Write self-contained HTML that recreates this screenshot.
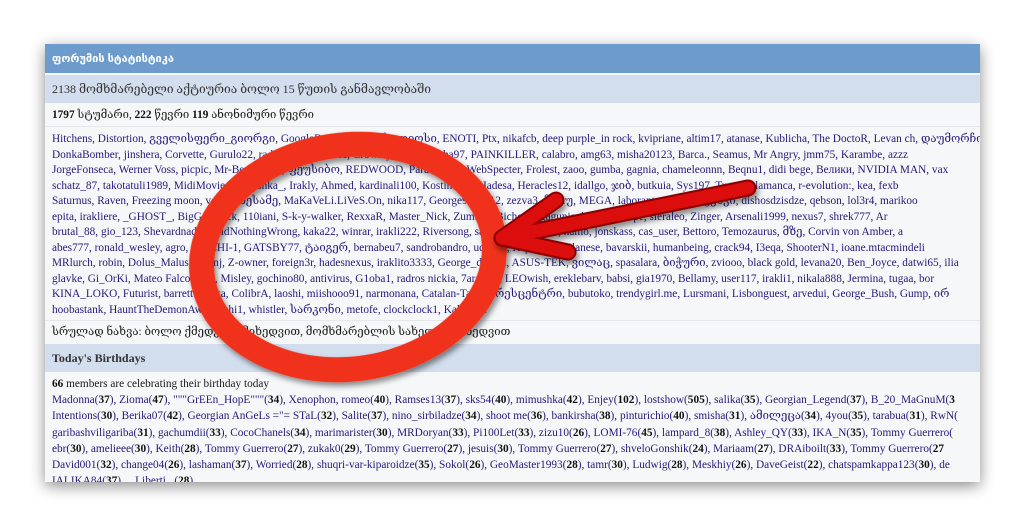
<!DOCTYPE html>
<html><head><meta charset="utf-8"><style>
*{margin:0;padding:0;box-sizing:border-box}
body{width:1024px;height:525px;background:#fff;overflow:hidden;position:relative;font-family:"Liberation Serif","DejaVu Serif",serif;font-size:11.3px;color:#1a1a1a}
.panel{position:absolute;left:45px;top:44px;width:935px;height:438px;background:#f5f7f8;overflow:hidden;box-shadow:0 4px 14px rgba(0,0,0,.45)}
.h1{height:29px;background:#6c9bcc;color:#fff;font-weight:bold;padding:8px 7px;font-size:11px;font-family:"Liberation Sans","DejaVu Sans",sans-serif}
.h2{height:28px;margin-top:2px;background:#d2dded;color:#333;padding:7px 7px;font-size:12px}
.row{padding:0 7px;white-space:nowrap;overflow:hidden}
.l{line-height:15.5px;color:#22197a}
.b2{line-height:16.2px;color:#22197a}
b{color:#111}
.sep{border-top:1px solid #e4e8ec}
</style></head><body>
<div class="panel">
<div class="h1">ფორუმის სტატისტიკა</div>
<div class="h2">2138 მომხმარებელი აქტიურია ბოლო 15 წუთის განმავლობაში</div>
<div class="row" style="padding-top:5px;height:23px"><b>1797</b> სტუმარი, <b>222</b> წევრი <b>119</b> ანონიმური წევრი</div>
<div class="row sep l" style="padding-top:5px;height:194px">
Hitchens, Distortion, გველისფერი_გიორგი, GoogleBot, hamlet78, ხუდიოსი, ENOTI, Ptx, nikafcb, deep purple_in rock, kvipriane, altim17, atanase, Kublicha, The DoctoR, Levan ch, დაუმორჩილებელი<br>
DonkaBomber, jinshera, Corvette, Gurulo22, raduga, mmwwwcc, Crowley, alexx, Lasha97, PAINKILLER, calabro, amg63, misha20123, Barca., Seamus, Mr Angry, jmm75, Karambe, azzz<br>
JorgeFonseca, Werner Voss, picpic, Mr-Bean, 4a4a, ფეუსიბო, REDWOOD, Paranormal, WebSpecter, Frolest, zaoo, gumba, gagnia, chameleonnn, Beqnu1, didi bege, Велики, NVIDIA MAN, vax<br>
schatz_87, takotatuli1989, MidiMovie, _marishka_, Irakly, Ahmed, kardinali100, Kostin-777, Hadesa, Heracles12, idallgo, ჯიბ, butkuia, Sys197, Tuco_Salamanca, r-evolution:, kea, fexb<br>
Saturnus, Raven, Freezing moon, vovok, მესამე, MaKaVeLi.LiVeS.On, nika117, George92, an12, zezva3, მ.დ.უ, MEGA, laborant, დოსტოევსკი, dishosdzisdze, qebson, lol3r4, marikoo<br>
epita, irakliere, _GHOST_, BigGeadnick, 110iani, S-k-y-walker, RexxaR, Master_Nick, Zumbus, Bicho80, gagunia, big_V, escape, sieraleo, Zinger, Arsenali1999, nexus7, shrek777, Ar<br>
brutal_88, gio_123, Shevardnadze, DidNothingWrong, kaka22, winrar, irakli222, Riversong, sangali, EDSONA, namo, jonskass, cas_user, Bettoro, Temozaurus, მზე, Corvin von Amber, a<br>
abes777, ronald_wesley, agro, MACHI-1, GATSBY77, ტაიგერ, bernabeu7, sandrobandro, udzlevi, Repetino, Milanese, bavarskii, humanbeing, crack94, I3eqa, ShooterN1, ioane.mtacmindeli<br>
MRlurch, robin, Dolus_Malus, jsonnj, Z-owner, foreign3r, hadesnexus, iraklito3333, George_datoch, ASUS-TEK, ვილაც, spasalara, ბიჭური, zviooo, black gold, levana20, Ben_Joyce, datwi65, ilia<br>
glavke, Gi_OrKi, Mateo Falco, rprp, Misley, gochino80, antivirus, G1oba1, radros nickia, 7arafans, LEOwish, ereklebarv, babsi, gia1970, Bellamy, user117, irakli1, nikala888, Jermina, tugaa, bor<br>
KINA_LOKO, Futurist, barretto, kaka, ColibrA, laoshi, miishooo91, narmonana, Catalan-Talin, პრესცენტრი, bubutoko, trendygirl.me, Lursmani, Lisbonguest, arvedui, George_Bush, Gump, ირ<br>
hoobastank, HauntTheDemonAway, oshi1, whistler, სარკონი, metofe, clockclock1, Kakhaber
</div>
<div class="row sep" style="padding-top:4px;height:24px">სრულად ნახვა: ბოლო ქმედების მიხედვით, მომხმარებლის სახელის მიხედვით</div>
<div class="h2" style="font-weight:bold;margin-top:0">Today's Birthdays</div>
<div class="row b2" style="padding-top:4px;color:#1a1a1a"><b>66</b> members are celebrating their birthday today</div>
<div class="row b2">
Madonna(<b>37</b>), Zioma(<b>47</b>), """GrEEn_HopE"""(<b>34</b>), Xenophon, romeo(<b>40</b>), Ramses13(<b>37</b>), sks54(<b>40</b>), mimushka(<b>42</b>), Enjey(<b>102</b>), lostshow(<b>505</b>), salika(<b>35</b>), Georgian_Legend(<b>37</b>), B_20_MaGnuM(<b>3</b><br>
Intentions(<b>30</b>), Berika07(<b>42</b>), Georgian AnGeLs ="= STaL(<b>32</b>), Salite(<b>37</b>), nino_sirbiladze(<b>34</b>), shoot me(<b>36</b>), bankirsha(<b>38</b>), pinturichio(<b>40</b>), smisha(<b>31</b>), ამილეცა(<b>34</b>), 4you(<b>35</b>), tarabua(<b>31</b>), RwN(<br>
garibashviligariba(<b>31</b>), gachumdii(<b>33</b>), CocoChanels(<b>34</b>), marimarister(<b>30</b>), MRDoryan(<b>33</b>), Pi100Let(<b>33</b>), zizu10(<b>26</b>), LOMI-76(<b>45</b>), lampard_8(<b>38</b>), Ashley_QY(<b>33</b>), IKA_N(<b>35</b>), Tommy Guerrero(<br>
ebr(<b>30</b>), amelieee(<b>30</b>), Keith(<b>28</b>), Tommy Guerrero(<b>27</b>), zukak0(<b>29</b>), Tommy Guerrero(<b>27</b>), jesuis(<b>30</b>), Tommy Guerrero(<b>27</b>), shveloGonshik(<b>24</b>), Mariaam(<b>27</b>), DRAiboilt(<b>33</b>), Tommy Guerrero(<b>27</b><br>
David001(<b>32</b>), change04(<b>26</b>), lashaman(<b>37</b>), Worried(<b>28</b>), shuqri-var-kiparoidze(<b>35</b>), Sokol(<b>26</b>), GeoMaster1993(<b>28</b>), tamr(<b>30</b>), Ludwig(<b>28</b>), Meskhiy(<b>26</b>), DaveGeist(<b>22</b>), chatspamkappa123(<b>30</b>), de<br>
IALIKA84(<b>37</b>), ...Liberti...(<b>28</b>)
</div>
</div>
<svg width="1024" height="525" style="position:absolute;left:0;top:0">
<defs><filter id="s" x="-20%" y="-20%" width="140%" height="140%"><feDropShadow dx="2" dy="4" stdDeviation="3" flood-opacity=".45"/></filter></defs>
<ellipse cx="348" cy="257" rx="147" ry="112" transform="rotate(-8 348 257)" fill="none" stroke="#f0321c" stroke-width="25" filter="url(#s)"/>
<g filter="url(#s)" fill="none" stroke-linecap="round" stroke-linejoin="round">
<path d="M748 188 L502 238 M556 200 L502 238 L568 252" stroke="#8a0000" stroke-width="17"/>
<path d="M748 188 L502 238 M556 200 L502 238 L568 252" stroke="#dc0a0a" stroke-width="13"/>
</g>
</svg>
</body></html>
